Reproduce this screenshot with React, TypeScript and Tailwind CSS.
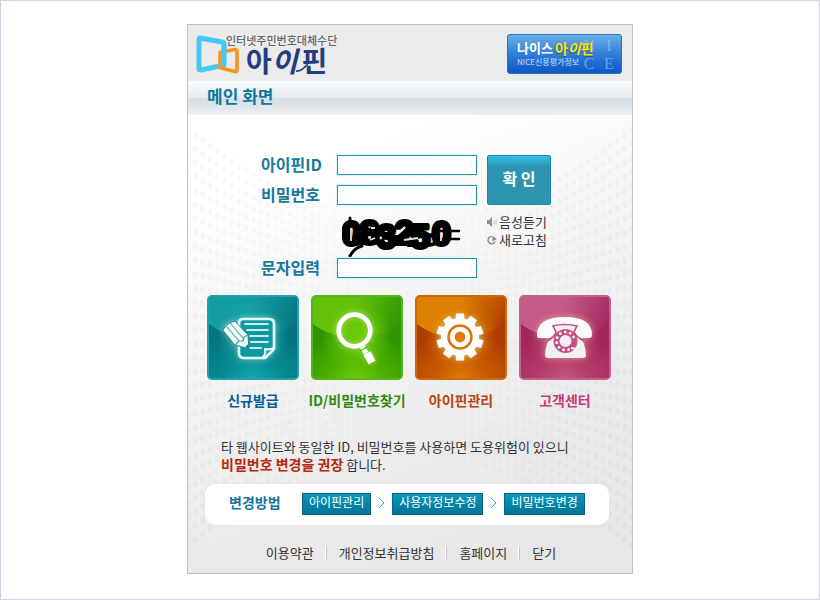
import type { ReactNode } from "react";

const DOT_ROWS = 30;
const DOT_COLS = 62;

const dots = Array.from({ length: DOT_ROWS * DOT_COLS }, (_, i) => {
  const row = Math.floor(i / DOT_COLS) / (DOT_ROWS - 1);
  const u = ((i % DOT_COLS) / (DOT_COLS - 1)) * 2 - 1;
  const bend = 1 - u * u;
  const top = 14 + bend * 92;
  const bottom = 430 - bend * 90;
  const edge = Math.abs(u);
  return {
    x: 222 + 222 * u,
    y: top + (bottom - top) * row,
    rx: 1.5 + edge * 1.1,
    ry: 1.6 + edge * 2.2,
    opacity: 0.013 + edge * 0.014,
  };
});

const Backdrop = () => (
  <svg className="absolute inset-0 w-full h-full" viewBox="0 0 444 458" preserveAspectRatio="none" aria-hidden="true">
    {dots.map((d, i) => (
      <ellipse key={i} cx={d.x} cy={d.y} rx={d.rx} ry={d.ry} fill="#000" opacity={d.opacity} />
    ))}
  </svg>
);

const Logo = () => (
  <a href="#" className="flex" aria-label="인터넷주민번호대체수단 아이핀">
    <svg width="44" height="42" viewBox="0 0 44 42" fill="none" strokeLinejoin="round" aria-hidden="true">
      <path d="M4 4 L26 8 Q28 8.500 28 10 V30 Q28 31 26 31.500 L5 36 Q3 36 3 35 V6 Q3 4 4 4Z" stroke="#43c8f7" strokeWidth="5" />
      <path d="M25 18 L39 15.500 Q41 15.500 41 17 V36 Q41 38 39 37.500 L25 34 Q24 34 24 32 V20 Q24 18 25 18Z" stroke="#f7941e" strokeWidth="3.6" />
      <path d="M28 12 V25" stroke="#43c8f7" strokeWidth="4.6" />
    </svg>
    <span className="flex flex-col -ml-3.5">
      <span className="text-[11px] leading-3 text-[#666] font-medium">인터넷주민번호대체수단</span>
      <span className="relative flex items-center pl-5 text-[28px] leading-7 text-[#243c80] font-bold">
        아
        <i>이</i>
        <span className="pl-1">핀</span>
        <svg className="absolute left-[62px] top-1" width="24" height="24" viewBox="0 0 24 24" fill="none" aria-hidden="true">
          <path d="M8 21 Q14 22 21 12" stroke="#243c80" strokeWidth="1.6" />
        </svg>
      </span>
    </span>
  </a>
);

const NiceBadge = () => (
  <a
    href="#"
    className="relative w-[115px] h-10 pl-[9px] pt-[5px] rounded-[3px] border border-[#2b6fc4] bg-linear-to-b from-[#69aeea] via-[#2f7fd8] to-[#0e55c4] overflow-hidden"
  >
    <span className="absolute right-0.5 top-0.5 grid grid-cols-2 w-10 text-center font-['Liberation_Serif',serif] text-base leading-[18px] text-[#8fbdf0]/70" aria-hidden="true">
      <span>N</span>
      <span>I</span>
      <span>C</span>
      <span>E</span>
    </span>
    <span className="relative flex items-center text-[13px] leading-4 font-bold text-white whitespace-nowrap">
      나이스<span className="pl-0.5 text-[#ffe600] text-sm leading-4 [text-shadow:0_1px_1px_#174a93]">아<i>이</i>핀</span>
    </span>
    <span className="relative block text-[8px] leading-3 text-[#c5def8] whitespace-nowrap">NICE신용평가정보</span>
  </a>
);

type FieldProps = { id: string; label: string; type?: string };

const Field = ({ id, label, type = "text" }: FieldProps) => (
  <div className="flex items-start h-5">
    <label htmlFor={id} className="w-[76px] text-base leading-[18px] font-bold text-[#16789a] whitespace-nowrap">
      {label}
    </label>
    <input
      id={id}
      type={type}
      className="w-[140px] h-5 px-1 text-xs bg-white border border-[#3090a0] shadow-[0_0_1px_1px_#d5fafa] outline-none"
    />
  </div>
);

const Captcha = () => (
  <svg width="120" height="42" viewBox="0 0 120 42" role="img" aria-label="083250" className="ml-[81px]">
    <g
      fill="#000"
      stroke="#000"
      strokeWidth="4"
      strokeLinejoin="round"
      fontFamily="Liberation Sans, sans-serif"
      fontSize="34"
      fontWeight="bold"
    >
      <text x="0 18 35 53 69 90" y="29 28 32 28 32 29">083250</text>
    </g>
    <g fill="none" stroke="#000" strokeLinecap="round">
      <path d="M8 2 V12 L10 26" strokeWidth="3" />
      <path d="M8 40 Q12 32 20 30" strokeWidth="3" />
      <path d="M98 15 H117 M98 23 H117" strokeWidth="2.5" />
      <path d="M16 20 Q30 16 48 20 T70 16 L92 20" strokeWidth="4" />
      <path d="M14 28 Q30 24 50 29" strokeWidth="4" />
      <path d="M66 29 H84 Q92 29 96 26" strokeWidth="4" />
    </g>
    <g fill="none" stroke="#e4e4e4" strokeWidth="1.8">
      <path d="M9 12 V25" />
      <path d="M99 19 V25 M58 15 L63 11 M62 24 L76 22 M28 24 L33 22 M29 12 H33" />
    </g>
  </svg>
);

type Tone = "teal" | "green" | "orange" | "pink";

const tones: Record<Tone, { edge: string; light: string; mid: string; dark: string; glow: string }> = {
  teal: { edge: "#22a0a8", light: "#159da5", mid: "#078a93", dark: "#04747e", glow: "#14a9b1" },
  green: { edge: "#53b51c", light: "#62c00a", mid: "#4cb000", dark: "#2f9304", glow: "#6ccb08" },
  orange: { edge: "#cc680c", light: "#de8000", mid: "#c45800", dark: "#ad3c00", glow: "#e07c04" },
  pink: { edge: "#c4608e", light: "#c55b8a", mid: "#b23a6b", dark: "#a1245a", glow: "#c8557f" },
};

type TileProps = { tone: Tone; label: string; labelClass: string; children: ReactNode };

const Tile = ({ tone, label, labelClass, children }: TileProps) => {
  const t = tones[tone];
  return (
    <a href="#" className="flex flex-col items-center w-[92px]">
      <svg width="92" height="85" viewBox="0 0 92 85" aria-hidden="true">
        <defs>
          <linearGradient id={`${tone}-top`} x1="0" y1="0" x2="1" y2="0.4">
            <stop offset="0" stopColor={t.light} />
            <stop offset="0.45" stopColor={t.light} />
            <stop offset="1" stopColor={t.dark} />
          </linearGradient>
          <radialGradient id={`${tone}-low`} cx="0.5" cy="1" r="0.8">
            <stop offset="0" stopColor={t.glow} />
            <stop offset="0.4" stopColor={t.mid} />
            <stop offset="1" stopColor={t.dark} />
          </radialGradient>
          <radialGradient id={`${tone}-glow`}>
            <stop offset="0" stopColor={t.glow} />
            <stop offset="0.5" stopColor={t.glow} stopOpacity="0.6" />
            <stop offset="1" stopColor={t.glow} stopOpacity="0" />
          </radialGradient>
        </defs>
        <rect width="92" height="85" rx="5" fill={t.edge} />
        <rect x="2" y="2" width="88" height="81" rx="3" fill={`url(#${tone}-top)`} />
        <path d="M2 29 Q18 42 46 42 Q74 42 90 27 V80 Q90 83 87 83 H5 Q2 83 2 80Z" fill={`url(#${tone}-low)`} />
        <circle cx="46" cy="42" r="36" fill={`url(#${tone}-glow)`} />
        <g className="[filter:drop-shadow(0_0_3px_rgba(255,255,190,0.45))]">{children}</g>
      </svg>
      <span className={`mt-2.5 mb-px text-sm leading-5 font-bold whitespace-nowrap ${labelClass}`}>{label}</span>
    </a>
  );
};

const NoteIcon = () => (
  <g strokeLinejoin="round" strokeLinecap="round">
    <path d="M36 24 H62 Q67 24 67 29 V54 L58 63 H37 Q32 63 32 58 V29 Q32 24 36 24Z" fill="#0b9aa3" stroke="#e9fbfb" strokeWidth="2.6" />
    <path d="M56 62 Q59 60 58 54 Q62 55 67 53" fill="none" stroke="#e9fbfb" strokeWidth="2.2" />
    <path d="M38 29 H61 M40 35 H61 M43 41 H61 M44 47 H61 M42 53 H54" stroke="#c9eff0" strokeWidth="1.8" />
    <path d="M16 35 Q19 28 28 26 L41 40 L42 54 L28 50Z" fill="#f4fbfb" stroke="#0b8a93" strokeWidth="1" />
    <path d="M19 31 L32 46 M23 28 L36 43" stroke="#6fb9be" strokeWidth="1.2" />
    <path d="M28 50 L32 46 L36 46 L37 42 L41 40" fill="none" stroke="#3b9ba2" strokeWidth="1.2" />
    <path d="M38 52 L42 54 L41 49Z" fill="#0b8a93" />
  </g>
);

const MagnifierIcon = () => (
  <g fill="none" stroke="#fff">
    <circle cx="43.5" cy="35.5" r="15.8" strokeWidth="4.8" />
    <path d="M51 51 L55 58" strokeWidth="5" />
    <path d="M49 56 L56 52" stroke="#5cb80c" strokeWidth="1.2" />
    <path d="M56 58 L61 67.5" strokeWidth="8" />
  </g>
);

const GearIcon = () => (
  <g fill="#fff">
    <circle cx="45" cy="42" r="19" />
    {Array.from({ length: 10 }, (_, i) => (
      <path key={i} d="M40.500 26 L41 18.500 H49 L49.500 26Z" transform={`rotate(${i * 36} 45 42)`} />
    ))}
    <circle cx="45" cy="42" r="11.500" fill="none" stroke="#d97304" strokeWidth="2.4" />
    <circle cx="45" cy="42" r="5.400" fill="#e27c04" />
  </g>
);

const PhoneIcon = () => (
  <g>
    <path d="M33 36 H60 V42 Q66 46 67 60 Q67 63 64 63 H29 Q26 63 26 60 Q27 46 33 42Z" fill="#f1f1f1" />
    <path d="M18 40 Q18 22 46 22 Q73 22 73 40 Q73 43 70 43 H62 Q59 43 58 40 L55 32 H38 L34 40 Q33 43 30 43 H20 Q18 43 18 40Z" fill="#fbfbfb" />
    <path d="M36 34 L40 38 H52 L56 34 L54 31 H38Z" fill="#f1f1f1" />
    <path d="M28 46 Q36 42 37 37 L34 31 Q45 28 58 31 L55 37 Q57 42 65 46" fill="none" stroke="#c04c80" strokeWidth="1.6" />
    <circle cx="46.500" cy="46" r="9" fill="none" stroke="#c64f83" strokeWidth="6" />
    {Array.from({ length: 9 }, (_, i) => (
      <circle key={i} cx="46.500" cy="37" r="1.4" fill="#fff" transform={`rotate(${i * 33 + 160} 46.500 46)`} />
    ))}
    <path d="M52 53 L59 54" stroke="#f1f1f1" strokeWidth="2" />
  </g>
);

const SpeakerIcon = () => (
  <svg width="10" height="10" viewBox="0 0 10 10" aria-hidden="true">
    <path d="M0 3 H2 L5 0 V10 L2 7 H0Z" fill="#8d8d95" />
    <path d="M7 3 V7 M9 2 V8" stroke="#c4c4ca" />
  </svg>
);

const RefreshIcon = () => (
  <svg width="10" height="10" viewBox="0 0 10 10" aria-hidden="true">
    <path d="M5 1.600 A3.600 3.600 0 1 0 8 6.500" fill="none" stroke="#8a8a8a" strokeWidth="1.3" />
    <path d="M5.500 1 L10 4 L5.500 6.500Z" fill="#8a8a8a" />
  </svg>
);

const Chevron = () => (
  <svg className="mt-1" width="21" height="12" viewBox="0 0 21 12" fill="none" aria-hidden="true">
    <path d="M8 1 L13 6 L8 11" stroke="#3aa0b8" />
  </svg>
);

const Step = ({ children }: { children: ReactNode }) => (
  <button
    type="button"
    className="h-[22px] px-1.5 pb-1 border border-[#0b6482] bg-linear-to-b from-[#0598bd] to-[#037396] text-white text-xs leading-4 whitespace-nowrap"
  >
    {children}
  </button>
);

const Divider = () => <span className="w-px h-3.5 bg-[#c4c4c4] shadow-[-1px_0_0_#fff]" />;

export default function App() {
  return (
    <div className="min-h-screen bg-white border border-[#d0d0e0] pt-[23px] pb-6 font-['Noto_Sans_CJK_KR',sans-serif] text-[#333]">
      <main className="max-w-[446px] mx-auto border border-[#c0c0c0]">
        <header className="flex justify-between items-start h-14 pl-2 pr-2.5 pt-[9px] bg-[#ebebeb]">
          <Logo />
          <NiceBadge />
        </header>
        <h1 className="h-[34px] pl-[19px] text-[17px] leading-[30px] font-bold text-[#0f789c] bg-[linear-gradient(#fafcfe,#e5eaee_50%,#d6dde3_52%,#dfe5ea_75%,#ecf1f5)]">
          메인 화면
        </h1>

        <div className="relative bg-[linear-gradient(160deg,#fff_15%,#f5f5f5_42%,#eaeaea_72%,#e6e6e6)]">
          <Backdrop />
          <div className="relative pt-10 pb-[11px]">
            <form className="flex gap-2.5 pl-[73px]">
              <div className="flex flex-col">
                <Field id="ipin-id" label="아이핀ID" />
                <div className="h-2.5" />
                <Field id="ipin-pw" label="비밀번호" type="password" />
                <div className="h-[53px] pt-[11px]">
                  <Captcha />
                </div>
                <Field id="captcha" label="문자입력" />
              </div>
              <div className="flex flex-col items-start">
                <button
                  type="button"
                  className="w-16 h-[50px] pb-1 rounded-xs border border-[#2383a0] bg-[linear-gradient(#2fc0ea,#2d95b0_22%,#2d95b0)] text-base font-bold text-white"
                >
                  확 인
                </button>
                <a href="#" className="flex items-center gap-0.5 mt-2 text-[13px] leading-[18px]">
                  <SpeakerIcon />
                  음성듣기
                </a>
                <a href="#" className="flex items-center gap-0.5 text-[13px] leading-[18px]">
                  <RefreshIcon />
                  새로고침
                </a>
              </div>
            </form>

            <nav className="flex gap-3 mt-[17px] px-[19px]">
              <Tile tone="teal" label="신규발급" labelClass="text-[#0a5c9a]">
                <NoteIcon />
              </Tile>
              <Tile tone="green" label="ID/비밀번호찾기" labelClass="text-[#2f8a14]">
                <MagnifierIcon />
              </Tile>
              <Tile tone="orange" label="아이핀관리" labelClass="text-[#b8430c]">
                <GearIcon />
              </Tile>
              <Tile tone="pink" label="고객센터" labelClass="text-[#c43a78]">
                <PhoneIcon />
              </Tile>
            </nav>

            <p className="mt-[27px] pl-[33px] text-[13px] leading-[18px]">
              타 웹사이트와 동일한 ID, 비밀번호를 사용하면 도용위험이 있으니
              <br />
              <strong className="text-sm leading-none font-bold text-[#b8280a]">비밀번호 변경을 권장</strong> 합니다.
            </p>

            <section className="flex items-start h-[41px] mt-2.5 ml-[17px] mr-[23px] pl-6 pt-[9px] rounded-[10px] bg-white shadow-[0_0_2px_#ddd]">
              <h2 className="w-[73px] text-sm leading-[18px] font-bold text-[#16789a]">변경방법</h2>
              <Step>아이핀관리</Step>
              <Chevron />
              <Step>사용자정보수정</Step>
              <Chevron />
              <Step>비밀번호변경</Step>
            </section>

            <footer className="flex items-center justify-center gap-3 mt-[19px] pl-0.5 text-[13px] leading-[18px]">
              <a href="#">이용약관</a>
              <Divider />
              <a href="#">개인정보취급방침</a>
              <Divider />
              <a href="#">홈페이지</a>
              <Divider />
              <a href="#">닫기</a>
            </footer>
          </div>
        </div>
      </main>
    </div>
  );
}
